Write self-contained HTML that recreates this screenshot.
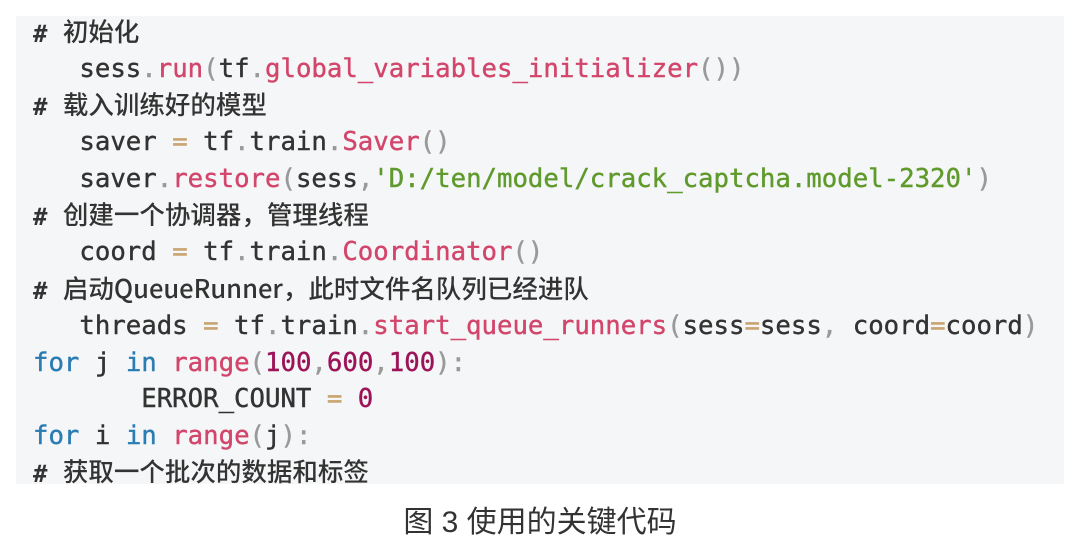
<!DOCTYPE html>
<html><head><meta charset="utf-8"><style>
body{margin:0;width:1080px;height:553px;background:#fff;position:relative;overflow:hidden}
.box{position:absolute;left:16px;top:16px;width:1048px;height:468px;background:#f5f6f7}
.l{position:absolute;left:33px;height:36px;line-height:36px;font-family:"DejaVu Sans Mono","Liberation Mono",monospace;font-size:25.7px;color:#333;white-space:pre;-webkit-text-stroke:0.4px currentColor}
.c{font-family:"DejaVu Sans Mono",monospace;font-size:24px;font-weight:bold;-webkit-text-stroke:0}
.c b{font-family:"Noto Sans CJK SC",sans-serif;font-size:25.5px;font-weight:500;margin-left:1px;position:relative;top:-1px}
.r{color:#d2466c}.n{color:#9c1458}.k{color:#2b7cb3}.s{color:#5f9a2c}.e{color:#c9a574}.p{color:#999}
.cap{position:absolute;left:0;width:1080px;top:497px;text-align:center;font-family:"Liberation Sans","Noto Sans CJK SC",sans-serif;font-size:30px;color:#333}
</style></head><body>
<div class="box"></div>
<div class="l c" style="top:14px"># <b>初始化</b></div>
<div class="l" style="top:51px">   sess<span class="p">.</span><span class="r">run</span><span class="p">(</span>tf<span class="p">.</span><span class="r">global_variables_initializer</span><span class="p">())</span></div>
<div class="l c" style="top:87px"># <b>载入训练好的模型</b></div>
<div class="l" style="top:124px">   saver <span class="e">=</span> tf<span class="p">.</span>train<span class="p">.</span><span class="r">Saver</span><span class="p">()</span></div>
<div class="l" style="top:161px">   saver<span class="p">.</span><span class="r">restore</span><span class="p">(</span>sess<span class="p">,</span><span class="s">'D:/ten/model/crack_captcha.model-2320'</span><span class="p">)</span></div>
<div class="l c" style="top:197px"># <b>创建一个协调器，管理线程</b></div>
<div class="l" style="top:234px">   coord <span class="e">=</span> tf<span class="p">.</span>train<span class="p">.</span><span class="r">Coordinator</span><span class="p">()</span></div>
<div class="l c" style="top:271px"># <b>启动QueueRunner，此时文件名队列已经进队</b></div>
<div class="l" style="top:308px">   threads <span class="e">=</span> tf<span class="p">.</span>train<span class="p">.</span><span class="r">start_queue_runners</span><span class="p">(</span>sess<span class="e">=</span>sess<span class="p">,</span> coord<span class="e">=</span>coord<span class="p">)</span></div>
<div class="l" style="top:345px"><span class="k">for</span> j <span class="k">in</span> <span class="r">range</span><span class="p">(</span><span class="n">100</span><span class="p">,</span><span class="n">600</span><span class="p">,</span><span class="n">100</span><span class="p">):</span></div>
<div class="l" style="top:381px">       ERROR_COUNT <span class="e">=</span> <span class="n">0</span></div>
<div class="l" style="top:418px"><span class="k">for</span> i <span class="k">in</span> <span class="r">range</span><span class="p">(</span>j<span class="p">):</span></div>
<div class="l c" style="top:454px"># <b>获取一个批次的数据和标签</b></div>
<div class="cap">图 3 使用的关键代码</div>
</body></html>
